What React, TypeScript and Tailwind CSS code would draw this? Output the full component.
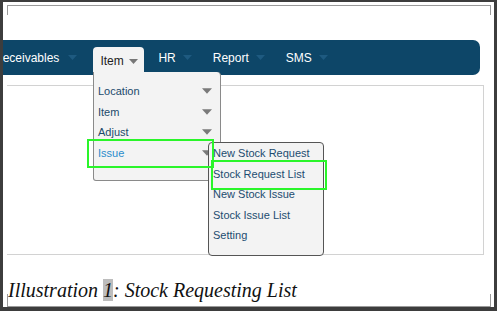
const Caret = ({ className }: { className: string }) => (
  <svg width="9" height="5" viewBox="0 0 9 5" className={className}>
    <path d="M0 0h9L4.5 5z" fill="currentColor" />
  </svg>
);

const navItems = ["HR", "Report", "SMS"];

const menuItems = ["Location", "Item", "Adjust", "Issue"];

const subItems = [
  "New Stock Request",
  "Stock Request List",
  "New Stock Issue",
  "Stock Issue List",
  "Setting",
];

export default function App() {
  return (
    <div className="h-[311px] w-[497px] overflow-hidden border-b-4 border-l-[3px] border-r-[3px] border-t-2 border-[#3d3d3d] bg-white">
      <div className="relative flex h-full flex-col">
        {/* page corner marks */}
        <div className="absolute left-[4px] right-[3px] top-[3px] h-[10px] border-l border-r border-t border-[#9a9a9a]" />
        <div className="absolute bottom-[0px] left-[4px] right-[3px] h-[13px] border-b border-l border-r border-[#9a9a9a]" />

        {/* nav bar */}
        <nav
          className="mt-[38px] flex h-[35px] w-[477px] items-end overflow-hidden rounded-r-[7px] bg-[#0d4668] text-[12px] text-white"
          style={{ fontFamily: '"Liberation Sans", Arial, sans-serif' }}
        >
          <div className="ml-[-9px] flex h-full items-center gap-[9px]">
            <span>Receivables</span>
            <Caret className="text-[#1e5a80]" />
          </div>
          <div className="ml-[16px] flex h-[28px] w-[51px] shrink-0 items-center gap-[5px] rounded-t-[4px] bg-[#f3f3f3] pl-[7px] text-[#222]">
            <span>Item</span>
            <Caret className="text-[#777]" />
          </div>
          <div className="ml-[14px] flex h-full items-center gap-[21px]">
            {navItems.map((n) => (
              <div key={n} className="flex items-center gap-[7px]">
                <span>{n}</span>
                <Caret className="text-[#1e5a80]" />
              </div>
            ))}
          </div>
        </nav>

        {/* content box */}
        <div className="mt-[10px] ml-[4px] h-[170px] w-[477px] border-b border-r border-t border-[#d2d2d2]" />

        {/* caption */}
        <div
          className="ml-[5px] mt-[23px] text-[20px] italic leading-[24px] text-[#111]"
          style={{ fontFamily: '"Liberation Serif", "Times New Roman", serif' }}
        >
          Illustration <span className="bg-[#bdbdbd]">1</span>: Stock Requesting List
        </div>

        {/* dropdown */}
        <div
          className="absolute left-[90px] top-[70px] flex h-[109px] w-[128px] flex-col rounded-b-[3px] rounded-tr-[4px] border-b border-l border-r border-[#8a8a8a] bg-[#f3f3f3] pt-[9px] text-[11px]"
          style={{ fontFamily: '"Liberation Sans", Arial, sans-serif' }}
        >
          {menuItems.map((m) => (
            <div key={m} className="flex h-[20.5px] items-center justify-between pl-[4px] pr-[8px]">
              <span className={m === "Issue" ? "text-[#2a8ccc]" : "text-[#1b4a6b]"}>{m}</span>
              <Caret className="h-[6px] w-[10px] text-[#7a7a7a]" />
            </div>
          ))}
        </div>

        {/* submenu */}
        <div
          className="absolute left-[205px] top-[140px] flex h-[114px] w-[116px] flex-col rounded-[4px] border border-[#555] bg-[#f3f3f3] text-[11px] text-[#1c4c70]"
          style={{ fontFamily: '"Liberation Sans", Arial, sans-serif' }}
        >
          {subItems.map((s) => (
            <div key={s} className="flex h-[20.5px] items-center pl-[4px]">
              {s}
            </div>
          ))}
        </div>

        {/* highlight boxes */}
        <div className="absolute left-[84px] top-[137px] h-[29px] w-[127px] border-2 border-[#2af52a]" />
        <div className="absolute left-[208px] top-[158px] h-[30px] w-[116px] border-2 border-[#2af52a]" />
      </div>
    </div>
  );
}
